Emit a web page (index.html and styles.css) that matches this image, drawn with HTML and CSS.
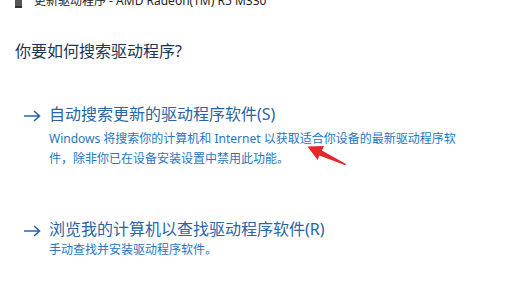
FILE: index.html
```html
<!DOCTYPE html>
<html lang="zh-CN">
<head>
    <meta charset="UTF-8">
    <title>更新驱动程序</title>
    <link rel="stylesheet" href="styles.css">
</head>
<body>

<div class="dialog">
    <!-- Window title, cut off by the screenshot -->
    <div class="titlebar">
        <span class="title-icon"></span>
        <span class="title-text">更新驱动程序 - AMD Radeon(TM) R5 M330</span>
    </div>

    <h1 class="question">你要如何搜索驱动程序?</h1>

    <div class="options">
        <a href="#" class="option">
            <svg class="option-arrow" width="18" height="12" viewBox="0 0 18 12">
                <path d="M1 6H16.5M11 1L16.5 6L11 11" fill="none" stroke="currentColor" stroke-width="1.6"/>
            </svg>
            <div class="option-body">
                <div class="option-title">自动搜索更新的驱动程序软件(S)</div>
                <div class="option-desc wide">Windows 将搜索你的计算机和 Internet 以获取适合你设备的最新驱动程序软件，除非你已在设备安装设置中禁用此功能。</div>
            </div>
        </a>

        <a href="#" class="option second">
            <svg class="option-arrow" width="18" height="12" viewBox="0 0 18 12">
                <path d="M1 6H16.5M11 1L16.5 6L11 11" fill="none" stroke="currentColor" stroke-width="1.6"/>
            </svg>
            <div class="option-body">
                <div class="option-title">浏览我的计算机以查找驱动程序软件(R)</div>
                <div class="option-desc">手动查找并安装驱动程序软件。</div>
            </div>
        </a>
    </div>

    <!-- red annotation arrow pasted over the screenshot -->
    <svg class="annotation" width="55" height="32" viewBox="0 0 55 32">
        <path d="M7.5 8.5L24 8L21.9 12.4L46 26L45.3 27.2L19.4 17.4L17.6 22Z" fill="#e6282a"/>
    </svg>
</div>

</body>
</html>
```

FILE: styles.css
```css
body {
    margin: 0;
    padding: 0;
    background-color: #fff;
    font-family: "Noto Sans", "Noto Sans CJK SC", sans-serif;
}

.dialog {
    position: relative;
    width: 521px;
    height: 307px;
    overflow: hidden;
    background-color: #fff;
}

/* Title bar */
.titlebar {
    display: flex;
    align-items: center;
    gap: 12px;
    margin-top: -7px;
    padding-left: 15px;
    height: 16px;
    font-size: 12px;
    line-height: 16px;
    color: #222;
}
.title-icon {
    width: 7px;
    height: 10px;
    margin-top: 2px;
    background-color: #555;
    border-bottom: 2px solid #333;
}

/* Question */
.question {
    margin: 31px 0 0 15px;
    font-size: 16px;
    font-weight: normal;
    line-height: 22px;
    color: #1c3553;
}

/* Options */
.options {
    padding-left: 23px;
}
.option {
    display: flex;
    gap: 8px;
    text-decoration: none;
    color: #2a64a6;
    margin-top: 41px;
}
.option.second {
    margin-top: 49px;
}
.option-arrow {
    flex: none;
    margin-top: 7px;
    color: #2a64a6;
}
.option-title {
    font-size: 16px;
    line-height: 22px;
    color: #2a64a6;
}
.option-desc {
    margin-top: 4px;
    font-size: 12px;
    line-height: 20px;
    color: #2676bf;
}
.option-desc.wide {
    width: 414px;
}
.second .option-desc {
    margin-top: 0;
}

/* Annotation */
.annotation {
    position: absolute;
    left: 300px;
    top: 138px;
}
```
